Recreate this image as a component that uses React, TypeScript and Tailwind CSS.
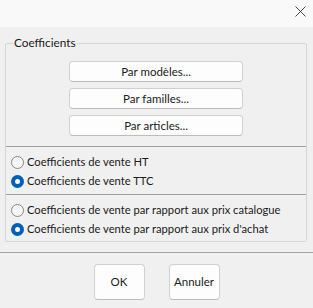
function PushButton({ label, className }: { label: string; className: string }) {
  return (
    <button
      className={`flex items-center justify-center rounded-[4px] border border-[#d0d0d0] border-b-[#bcbcbc] bg-[#fdfdfd] text-[11.5px] text-[#1b1b1b] ${className}`}
    >
      {label}
    </button>
  )
}

function Radio({ label, checked }: { label: string; checked?: boolean }) {
  return (
    <label className="flex h-[19px] items-center gap-[3px] whitespace-nowrap pl-[5px]">
      {checked ? (
        <span className="flex h-[13px] w-[13px] shrink-0 items-center justify-center rounded-full bg-[#005fb8]">
          <span className="h-[5px] w-[5px] rounded-full bg-white" />
        </span>
      ) : (
        <span className="h-[13px] w-[13px] shrink-0 rounded-full border border-[#858585] bg-[#f6f6f6]" />
      )}
      <span>{label}</span>
    </label>
  )
}

export default function App() {
  return (
    <div
      className="flex h-[308px] w-[313px] flex-col bg-[#f0f0f0] text-[11.2px] text-[#1b1b1b]"
      style={{ fontFamily: 'Lato, "Liberation Sans", sans-serif' }}
    >
      <div className="flex h-[27px] shrink-0 justify-end bg-[#f9f9f9]">
        <svg className="mr-[7px] mt-[6px]" width="11" height="11" viewBox="0 0 11 11">
          <path d="M0.5 0.5 L10.5 10.5 M10.5 0.5 L0.5 10.5" stroke="#4a4a4a" strokeWidth="1" fill="none" />
        </svg>
      </div>

      <fieldset className="ml-[5px] mr-[6px] mt-[8px] rounded-[2px] border border-[#d5d5d5]">
        <legend className="ml-[7px] h-[16px] px-[1px] text-[11.8px] leading-[16px]">Coefficients</legend>
        <div className="flex flex-col items-center gap-[6px] pt-[10px] pb-[10px]">
          <PushButton label="Par modèles..." className="h-[21px] w-[174px]" />
          <PushButton label="Par familles..." className="h-[21px] w-[174px]" />
          <PushButton label="Par articles..." className="h-[21px] w-[174px]" />
        </div>
        <div className="border-t border-[#a0a0a0] pt-[6px] pb-[3px]">
          <Radio label="Coefficients de vente HT" />
          <Radio label="Coefficients de vente TTC" checked />
        </div>
        <div className="border-t border-[#a0a0a0] pt-[6px] pb-[2px]">
          <Radio label="Coefficients de vente par rapport aux prix catalogue" />
          <Radio label="Coefficients de vente par rapport aux prix d'achat" checked />
        </div>
      </fieldset>

      <div className="mt-[10px] border-t border-[#a0a0a0]" />

      <div className="mt-[11px] flex justify-center gap-[24px]">
        <PushButton label="OK" className="h-[36px] w-[51px]" />
        <PushButton label="Annuler" className="h-[36px] w-[51px]" />
      </div>
    </div>
  )
}
